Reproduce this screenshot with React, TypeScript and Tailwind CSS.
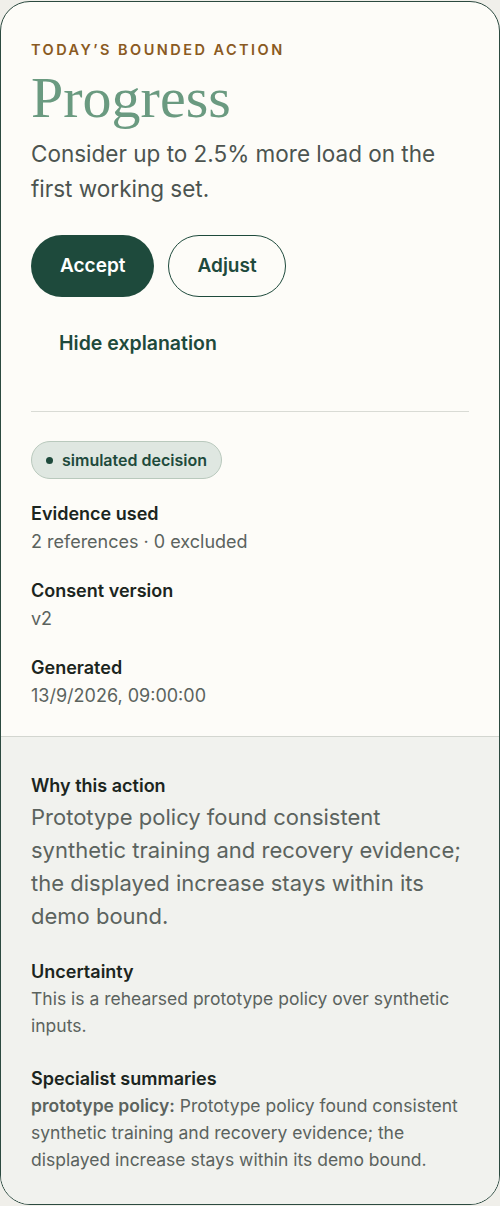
import React from 'react';

const sans = { fontFamily: 'Inter, "Noto Sans", sans-serif' };
const serif = { fontFamily: '"Liberation Serif", "DejaVu Serif", serif' };

const MetaRow = ({ label, value }: { label: string; value: string }) => (
  <div>
    <div className="text-[18px] font-semibold leading-[28px] text-[#1b2520]">{label}</div>
    <div className="text-[18px] leading-[28px] text-[#5b635e]">{value}</div>
  </div>
);

const App = () => {
  return (
    <div className="min-h-[1206px] bg-[#f0efea] pt-px pb-[2px]" style={sans}>
      <section className="rounded-[30px] border-[1.5px] border-[#2c4a40] bg-[#fdfcf8] overflow-hidden">
        {/* Top: action */}
        <div className="px-[30px] pt-[38px] pb-[26px]">
          <div className="text-[14.5px] font-semibold uppercase tracking-[0.17em] text-[#8a5a22] leading-[20px]">
            Today’s bounded action
          </div>
          <h1 className="mt-[6px] text-[58px] leading-[64px] text-[#6a9a80]" style={serif}>
            Progress
          </h1>
          <p className="mt-[6px] text-[22.5px] leading-[35px] text-[#4c5450]">
            Consider up to 2.5% more load on the first working set.
          </p>

          <div className="mt-[29px] flex items-center gap-[14px]">
            <button className="h-[62px] px-[29px] rounded-full bg-[#1e4a3c] text-white text-[19px] font-semibold">
              Accept
            </button>
            <button className="h-[62px] px-[28px] rounded-full border-[1.5px] border-[#1e4a3c] text-[#1e4a3c] text-[19px] font-semibold">
              Adjust
            </button>
          </div>

          <button className="mt-[16px] h-[62px] px-[28px] text-[19.5px] font-semibold text-[#1e4a3c]">
            Hide explanation
          </button>

          <div className="mt-[36px] h-px bg-[#d9dbd5]" />

          <div className="mt-[29px]">
            <span className="inline-flex items-center gap-[9px] h-[38px] px-[14px] rounded-full border border-[#b9c9bd] bg-[#dfe7e1] text-[16px] font-semibold text-[#1e4a3c]">
              <span className="w-[7px] h-[7px] rounded-full bg-[#1e4a3c]" />
              simulated decision
            </span>
          </div>

          <div className="mt-[21px] flex flex-col gap-[21px]">
            <MetaRow label="Evidence used" value="2 references · 0 excluded" />
            <MetaRow label="Consent version" value="v2" />
            <MetaRow label="Generated" value="13/9/2026, 09:00:00" />
          </div>
        </div>

        {/* Explanation */}
        <div className="border-t border-[#d3d6d0] bg-[#f1f2ee] px-[30px] pt-[36px] pb-[31px]">
          <div className="text-[18px] font-semibold leading-[26px] text-[#1b2520]">Why this action</div>
          <p className="mt-[2px] text-[22px] leading-[33px] text-[#5b635e]">
            Prototype policy found consistent synthetic training and recovery evidence; the displayed increase stays within its demo bound.
          </p>

          <div className="mt-[26px] text-[18px] font-semibold leading-[26px] text-[#1b2520]">Uncertainty</div>
          <p className="text-[17.5px] leading-[27px] text-[#5b635e]">
            This is a rehearsed prototype policy over synthetic inputs.
          </p>

          <div className="mt-[27px] text-[18px] font-semibold leading-[26px] text-[#1b2520]">Specialist summaries</div>
          <p className="text-[17.5px] leading-[27px] text-[#5b635e]">
            <span className="font-semibold">prototype policy:</span> Prototype policy found consistent synthetic training and recovery evidence; the displayed increase stays within its demo bound.
          </p>
        </div>
      </section>
    </div>
  );
};

export default App;
